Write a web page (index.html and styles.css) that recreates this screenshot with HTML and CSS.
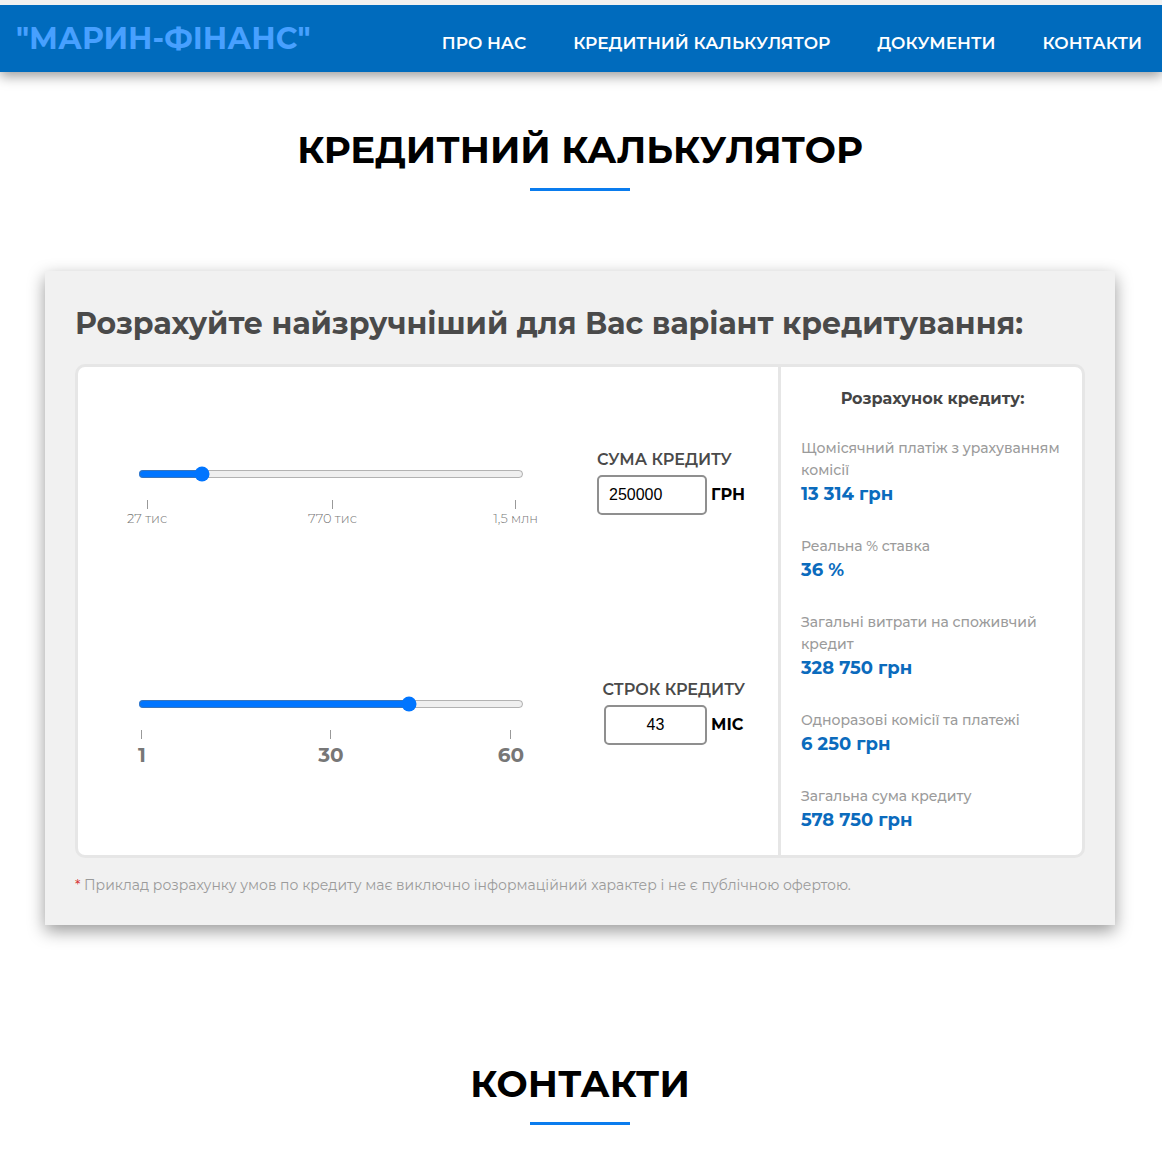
FILE: index.html
```html
<!DOCTYPE html>
<html lang="uk">
<head>
<meta charset="utf-8">
<meta name="viewport" content="width=device-width, initial-scale=1">
<title>Марин-Фінанс</title>
<link rel="stylesheet" href="styles.css">
</head>
<body>
<header class="header">
  <a class="logo" href="#">"МАРИН-ФІНАНС"</a>
  <nav class="nav">
    <a href="#about">ПРО НАС</a>
    <a href="#calculator">КРЕДИТНИЙ КАЛЬКУЛЯТОР</a>
    <a href="#documents">ДОКУМЕНТИ</a>
    <a href="#contacts">КОНТАКТИ</a>
  </nav>
</header>
<main class="main">
  <section class="section" id="calculator">
    <h2 class="section-title">КРЕДИТНИЙ КАЛЬКУЛЯТОР</h2>
    <div class="card">
      <h3 class="card-title">Розрахуйте найзручніший для Вас варіант кредитування:</h3>
      <div class="calc">
        <form class="controls">
          <div class="control">
            <div class="slider">
              <input class="range" type="range" min="27000" max="1500000" step="1000" value="250000" aria-label="Сума кредиту">
              <ul class="scale scale-sum">
                <li>27 тис</li>
                <li>770 тис</li>
                <li>1,5 млн</li>
              </ul>
            </div>
            <div class="field">
              <label class="field-label" for="sum">СУМА КРЕДИТУ</label>
              <div class="field-row">
                <input class="field-input" id="sum" type="text" value="250000">
                <span class="unit">ГРН</span>
              </div>
            </div>
          </div>
          <div class="control">
            <div class="slider">
              <input class="range" type="range" min="1" max="60" value="43" aria-label="Строк кредиту">
              <ul class="scale scale-term">
                <li>1</li>
                <li>30</li>
                <li>60</li>
              </ul>
            </div>
            <div class="field field-term">
              <label class="field-label" for="term">СТРОК КРЕДИТУ</label>
              <div class="field-row">
                <input class="field-input" id="term" type="text" value="43">
                <span class="unit">МІС</span>
              </div>
            </div>
          </div>
        </form>
        <div class="results">
          <h4 class="results-title">Розрахунок кредиту:</h4>
          <dl class="results-list">
            <div><dt>Щомісячний платіж з урахуванням комісії</dt><dd>13 314 грн</dd></div>
            <div><dt>Реальна % ставка</dt><dd>36 %</dd></div>
            <div><dt>Загальні витрати на споживчий кредит</dt><dd>328 750 грн</dd></div>
            <div><dt>Одноразові комісії та платежі</dt><dd>6 250 грн</dd></div>
            <div><dt>Загальна сума кредиту</dt><dd>578 750 грн</dd></div>
          </dl>
        </div>
      </div>
      <p class="note"><span class="star">*</span> Приклад розрахунку умов по кредиту має виключно інформаційний характер і не є публічною офертою.</p>
    </div>
  </section>
  <section class="section" id="contacts">
    <h2 class="section-title">КОНТАКТИ</h2>
  </section>
</main>
</body>
</html>
```
FILE: styles.css
```css
* {
  box-sizing: border-box;
}

body {
  margin: 0;
  background: #fff;
  color: #000;
  font-family: Montserrat, Inter, "Open Sans", sans-serif;
}

h2, h3, h4, p, ul, dl, dd {
  margin: 0;
  padding: 0;
}

.header {
  display: flex;
  align-items: center;
  justify-content: space-between;
  padding: 0 20px 0 16px;
  height: 72px;
  border-top: 5px solid #f1f1f0;
  background: #006bbd;
  box-shadow: 0 4px 12px rgba(0, 0, 0, 0.4);
}

.header a {
  text-decoration: none;
  white-space: nowrap;
}

.logo {
  color: #47a0ff;
  font-size: 30px;
  font-weight: 700;
}

.nav {
  display: flex;
  gap: 47px;
  padding-top: 8px;
}

.nav a {
  color: #fff;
  font-size: 17px;
  font-weight: 600;
}

.main {
  padding: 55px 2px 37px 0;
}

.section {
  padding: 0 45px;
}

.section + .section {
  margin-top: 136px;
}

.section-title {
  font-size: 37px;
  font-weight: 700;
  line-height: 46px;
  text-align: center;
}

.section-title::after {
  content: "";
  display: block;
  width: 100px;
  height: 3px;
  margin: 15px auto 0;
  background: #0a7cee;
}

.card {
  margin-top: 80px;
  padding: 30px 30px 28px;
  background: #f1f1f1;
  box-shadow: 0 6px 16px rgba(0, 0, 0, 0.4);
}

.card-title {
  margin-bottom: 18px;
  color: #4a4a4a;
  font-size: 30px;
  font-weight: 700;
  line-height: 45px;
}

.calc {
  display: grid;
  grid-template-columns: minmax(0, 1fr) 304px;
  border: 3px solid #e6e6e6;
  border-radius: 10px;
  background: #fff;
}

.controls {
  display: grid;
  align-content: start;
  gap: 164px;
  padding: 82px 33px 82px 60px;
}

.control {
  display: grid;
  grid-template-columns: minmax(0, 386px) 148px;
  justify-content: space-between;
  height: 66px;
}

.slider {
  padding-top: 17px;
}

.range {
  display: block;
  width: 100%;
  height: 16px;
  margin: 0 0 18px;
}

.scale {
  display: grid;
  grid-template-columns: 1fr auto 1fr;
  list-style: none;
  color: #777;
}

.scale li {
  display: flex;
  flex-direction: column;
  align-items: center;
  justify-self: start;
}

.scale li:last-child {
  justify-self: end;
}

.scale li::before {
  content: "";
  width: 1px;
  height: 9px;
  background: #999;
}

.scale-sum {
  margin: 0 -14px 0 -11px;
  font-size: 13px;
  font-weight: 300;
  line-height: 19px;
}

.scale-term {
  font-size: 20px;
  font-weight: 700;
  line-height: 32px;
}

.field {
  display: flex;
  flex-direction: column;
  gap: 4px;
}

.field-term {
  align-items: flex-end;
}

.field-label {
  color: #4a4a4a;
  font-size: 16px;
  font-weight: 600;
  line-height: 22px;
  white-space: nowrap;
}

.field-row {
  display: flex;
  align-items: center;
  gap: 4px;
}

.field-input {
  width: 110px;
  height: 40px;
  padding: 0 10px;
  border: 2px solid #8f8f8f;
  border-radius: 5px;
  background: #fff;
  color: #000;
  font-family: "Liberation Sans", Arial, sans-serif;
  font-size: 16px;
}

.field-term .field-input {
  width: 103px;
  text-align: center;
}

.unit {
  width: 34px;
  padding-bottom: 2px;
  font-size: 16px;
  font-weight: 700;
}

.results {
  padding: 21px 18px 21px 20px;
  border-left: 3px solid #e6e6e6;
}

.results-title {
  margin-bottom: 27px;
  color: #444;
  font-size: 16px;
  font-weight: 700;
  line-height: 22px;
  text-align: center;
}

.results-list {
  display: grid;
  gap: 27px;
}

.results-list dt {
  color: #9b9b9b;
  font-size: 14px;
  font-weight: 500;
  line-height: 22px;
}

.results-list dd {
  color: #0b6bbd;
  font-size: 18px;
  font-weight: 700;
  line-height: 27px;
}

.note {
  margin-top: 15px;
  color: #9b9b9b;
  font-size: 14px;
  font-weight: 400;
  line-height: 24px;
}

.star {
  color: #d63333;
}
```
